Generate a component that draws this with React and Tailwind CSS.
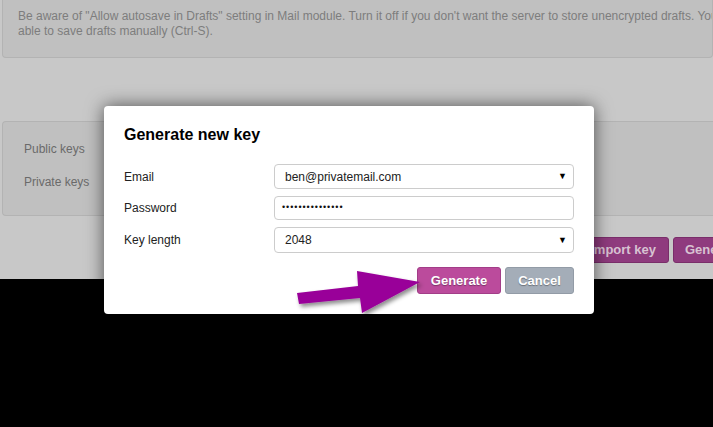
import React from 'react';

const font = { fontFamily: '"Liberation Sans", Arial, sans-serif' };

function Field({ label, children, className }) {
    return (
        <div className={"flex items-center " + (className || "")}>
            <span className="w-[150px] shrink-0 text-[12px] text-[#222]">{label}</span>
            {children}
        </div>
    );
}

function Caret() {
    return <span className="ml-auto text-[9px] text-black leading-none">▼</span>;
}

function Arrow() {
    return (
        <svg className="absolute left-[290px] top-[266px] pointer-events-none" width="140" height="56" viewBox="290 266 140 56">
            <defs>
                <filter id="sh" x="-20%" y="-20%" width="140%" height="160%">
                    <feDropShadow dx="2" dy="3" stdDeviation="2" floodColor="#000" floodOpacity="0.45" />
                </filter>
            </defs>
            <polygon
                filter="url(#sh)"
                fill="#990099"
                points="297,293 358,286 357,271 420,282 362,313 360,298 299,304"
            />
        </svg>
    );
}

export default function App() {
    return (
        <div className="relative w-[713px] h-[427px] overflow-hidden bg-black" style={font}>
            {/* dimmed page */}
            <div className="h-[279px] bg-[#c8c8c8] flex flex-col">
                <div className="ml-[2px] h-[58px] border border-t-0 border-[#b3b3b3] rounded-b-[4px] bg-[#c0c0c0] pl-[15px] pt-[9px] text-[12px] leading-[15px] text-[#7d7d7d] whitespace-nowrap overflow-hidden">
                    <div>Be aware of "Allow autosave in Drafts" setting in Mail module. Turn it off if you don't want the server to store unencrypted drafts. You will be</div>
                    <div>able to save drafts manually (Ctrl-S).</div>
                </div>
                <div className="ml-[2px] mt-[63px] h-[95px] border border-r-0 border-[#b3b3b3] rounded-l-[4px] bg-[#c0c0c0] pl-[21px] pt-[20px] text-[12px] text-[#6a6a6a] flex flex-col gap-[19px] leading-[14px]">
                    <span>Public keys</span>
                    <span>Private keys</span>
                </div>
                <div className="mt-[21px] flex justify-end gap-[4px] -mr-[60px]">
                    <div className="h-[26px] w-[84px] rounded-[3px] border border-[#7a2e6a] bg-[#8f3b7e] text-[#d8c2d2] font-bold text-[13px] flex items-center justify-end pr-[12px]">Import key</div>
                    <div className="h-[26px] w-[100px] rounded-[3px] border border-[#7a2e6a] bg-[#8f3b7e] text-[#d8c2d2] font-bold text-[13px] flex items-center pl-[11px]">Generate</div>
                </div>
            </div>

            {/* modal */}
            <div className="absolute left-[104px] top-[106px] w-[490px] h-[208px] bg-white rounded-[4px] shadow-[0_0_18px_rgba(0,0,0,0.6)] px-[20px] pt-[19px]">
                <h2 className="text-[16px] font-bold text-black leading-[19px]">Generate new key</h2>
                <div className="mt-[20px] flex flex-col">
                    <Field label="Email">
                        <div className="flex-1 h-[25px] border border-[#ccc] rounded-[4px] flex items-center pl-[10px] pr-[6px] text-[12px] text-[#222]">
                            ben@privatemail.com
                            <Caret />
                        </div>
                    </Field>
                    <Field label="Password" className="mt-[7px]">
                        <div className="flex-1 h-[24px] border border-[#ccc] rounded-[4px] flex items-center pl-[7px] text-[9px] text-[#111] tracking-[0.95px]">
                            •••••••••••••••
                        </div>
                    </Field>
                    <Field label="Key length" className="mt-[7px]">
                        <div className="flex-1 h-[26px] border border-[#ccc] rounded-[4px] flex items-center pl-[10px] pr-[6px] text-[12px] text-[#222]">
                            2048
                            <Caret />
                        </div>
                    </Field>
                </div>
                <div className="mt-[14px] flex justify-end gap-[4px]">
                    <button className="h-[27px] w-[84px] rounded-[3px] border border-[#a23d88] bg-[#bb4b9c] text-white font-bold text-[13px] [text-shadow:0_1px_1px_rgba(0,0,0,0.35)]">Generate</button>
                    <button className="h-[27px] w-[69px] rounded-[3px] border border-[#929ba6] bg-[#a4adb8] text-white font-bold text-[13px] [text-shadow:0_1px_1px_rgba(0,0,0,0.35)]">Cancel</button>
                </div>
            </div>

            <Arrow />
        </div>
    );
}
